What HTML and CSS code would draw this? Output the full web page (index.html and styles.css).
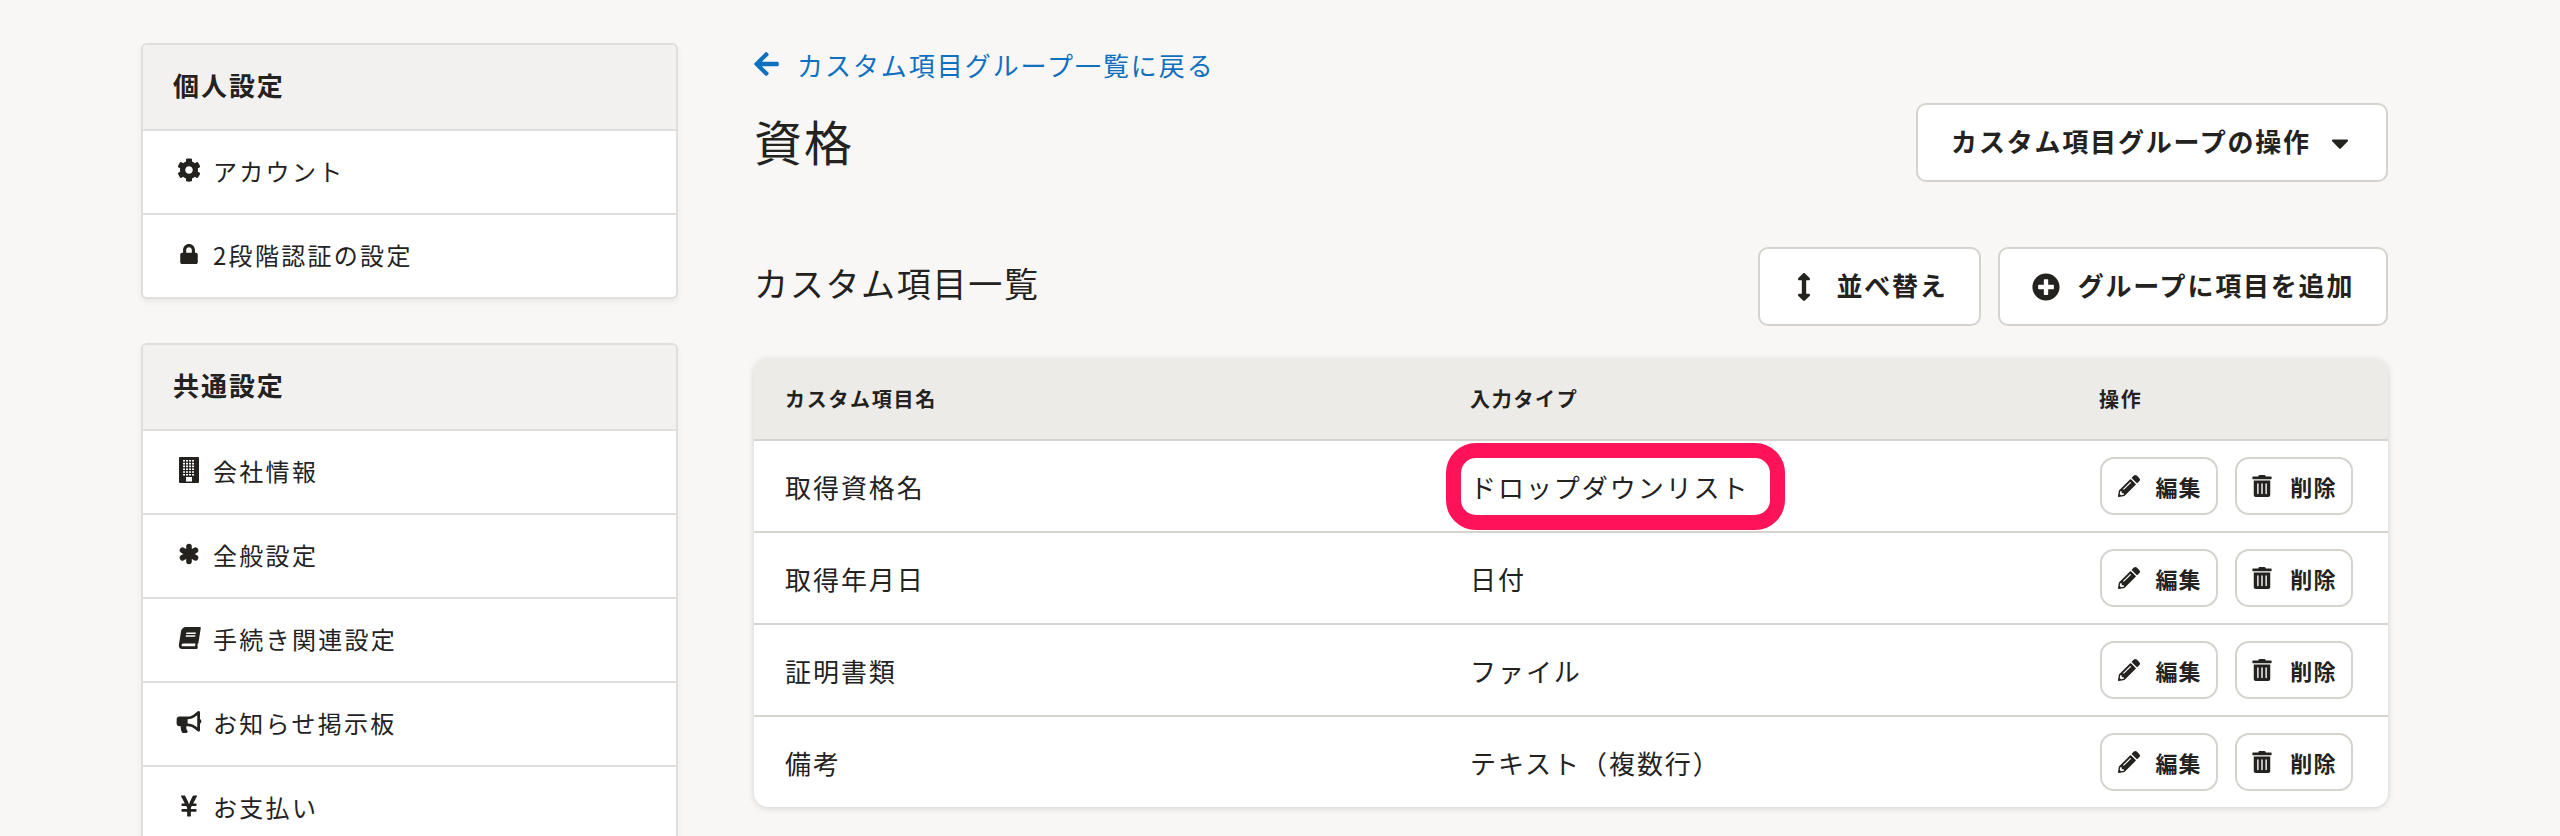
FILE: index.html

```html
<!DOCTYPE html>
<html lang="ja">
<head>
    <meta charset="UTF-8">
    <title>資格</title>
    <link rel="stylesheet" href="styles.css">
</head>
<body>
    <svg class="sprite" xmlns="http://www.w3.org/2000/svg">
        <symbol id="i-cog" viewBox="0 0 512 512"><path d="M487.4 315.7l-42.6-24.6c4.3-23.2 4.3-47 0-70.2l42.6-24.6c4.9-2.8 7.1-8.6 5.5-14-11.1-35.6-30-67.8-54.7-94.6-3.8-4.1-10-5.1-14.8-2.3L380.8 110c-17.9-15.4-38.5-27.3-60.8-35.1V25.8c0-5.6-3.9-10.5-9.4-11.7-36.7-8.2-74.3-7.8-109.2 0-5.5 1.2-9.4 6.1-9.4 11.7V75c-22.2 7.9-42.8 19.8-60.8 35.1L88.7 85.5c-4.9-2.8-11-1.9-14.8 2.3-24.7 26.7-43.6 58.9-54.7 94.6-1.7 5.4.6 11.2 5.5 14L67.3 221c-4.3 23.2-4.3 47 0 70.2l-42.6 24.6c-4.9 2.8-7.1 8.6-5.5 14 11.1 35.6 30 67.8 54.7 94.6 3.8 4.1 10 5.1 14.8 2.3l42.6-24.6c17.9 15.4 38.5 27.3 60.8 35.1v49.2c0 5.6 3.9 10.5 9.4 11.7 36.7 8.2 74.3 7.8 109.2 0 5.5-1.2 9.4-6.1 9.4-11.7v-49.2c22.2-7.9 42.8-19.8 60.8-35.1l42.6 24.6c4.9 2.8 11 1.9 14.8-2.3 24.7-26.7 43.6-58.9 54.7-94.6 1.5-5.5-.7-11.3-5.6-14.1zM256 336c-44.1 0-80-35.9-80-80s35.9-80 80-80 80 35.9 80 80-35.9 80-80 80z"/></symbol>
        <symbol id="i-lock" viewBox="0 0 448 512"><path d="M400 224h-24v-72C376 68.2 307.8 0 224 0S72 68.2 72 152v72H48c-26.5 0-48 21.5-48 48v192c0 26.5 21.5 48 48 48h352c26.5 0 48-21.5 48-48V272c0-26.5-21.5-48-48-48zm-104 0H152v-72c0-39.7 32.3-72 72-72s72 32.3 72 72v72z"/></symbol>
        <symbol id="i-building" viewBox="0 0 20 26">
            <path fill-rule="evenodd" d="M1 0h18a1 1 0 0 1 1 1v24a1 1 0 0 1-1 1H1a1 1 0 0 1-1-1V1a1 1 0 0 1 1-1zM4 3v1.600h2V3zm3 0v1.600h2V3zm3 0v1.600h2V3zm3 0v1.600h2V3zM4 5.800v1.600h2V5.800zm3 0v1.600h2V5.800zm3 0v1.600h2V5.800zm3 0v1.600h2V5.800zM4 8.600v1.600h2V8.600zm3 0v1.600h2V8.600zm3 0v1.600h2V8.600zm3 0v1.600h2V8.600zM4 11.400V13h2v-1.600zm3 0V13h2v-1.600zm3 0V13h2v-1.600zm3 0V13h2v-1.600zM4 14.200v1.600h2v-1.600zm3 0v1.600h2v-1.600zm3 0v1.600h2v-1.600zm3 0v1.600h2v-1.600zM4 17v1.600h2V17zm3 0v1.600h2V17zm3 0v1.600h2V17zm3 0v1.600h2V17zM7 20v4.500h6V20z"/>
        </symbol>
        <symbol id="i-asterisk" viewBox="0 0 22 22"><path d="M11 3.500v15M4.500 7.250l13 7.500M17.500 7.250l-13 7.500" fill="none" stroke="currentColor" stroke-width="5.600" stroke-linecap="round"/></symbol>
        <symbol id="i-book" viewBox="-40 0 540 512"><path transform="skewX(-9) translate(60 0)" d="M448 360V24c0-13.3-10.7-24-24-24H96C43 0 0 43 0 96v320c0 53 43 96 96 96h328c13.3 0 24-10.7 24-24v-16c0-7.5-3.5-14.3-8.9-18.7-4.2-15.4-4.2-59.3 0-74.7 5.4-4.3 8.9-11.1 8.9-18.6zM128 134c0-3.3 2.7-6 6-6h212c3.3 0 6 2.7 6 6v20c0 3.3-2.7 6-6 6H134c-3.3 0-6-2.7-6-6v-20zm0 64c0-3.3 2.7-6 6-6h212c3.3 0 6 2.7 6 6v20c0 3.3-2.7 6-6 6H134c-3.3 0-6-2.7-6-6v-20zm253.4 250H96c-17.7 0-32-14.3-32-32 0-17.6 14.4-32 32-32h285.4c-1.9 17.1-1.9 46.9 0 64z"/></symbol>
        <symbol id="i-bullhorn" viewBox="0 0 576 512"><path d="M576 240c0-23.63-12.95-44.04-32-55.12V32.01C544 23.26 537.02 0 512 0c-7.12 0-14.19 2.38-19.98 7.02l-85.03 68.03C364.28 109.19 310.66 128 256 128H64c-35.35 0-64 28.65-64 64v96c0 35.35 28.65 64 64 64h33.7c-1.39 10.48-2.18 21.14-2.18 32 0 39.77 9.26 77.35 25.56 110.94 5.19 10.69 16.52 17.06 28.4 17.06h74.28c26.05 0 41.69-29.84 25.9-50.56-16.4-21.52-26.15-48.36-26.15-77.44 0-11.11 1.62-21.79 4.41-32H256c54.66 0 108.28 18.81 150.98 52.95l85.03 68.03a32.023 32.023 0 0 0 19.98 7.02c24.92 0 32-22.78 32-32V295.13C563.05 284.04 576 263.63 576 240zm-96 141.42l-33.05-26.44C392.95 311.78 325.12 288 256 288v-96c69.12 0 136.95-23.78 190.95-66.98L480 98.58v282.84z"/></symbol>
        <symbol id="i-yen" viewBox="0 0 384 512"><path d="M351.2 32h-65.3c-4.6 0-8.8 2.6-10.8 6.7l-55.4 113.2c-14.5 34.7-27.1 71.9-27.1 71.9h-1.3s-12.6-37.2-27.1-71.9L108.8 38.7c-2-4.1-6.2-6.7-10.8-6.7H32.8c-9.1 0-14.9 9.7-10.6 17.7L102.6 200H44c-6.6 0-12 5.4-12 12v32c0 6.6 5.4 12 12 12h88.2l19.8 37.2V320H44c-6.6 0-12 5.4-12 12v32c0 6.6 5.4 12 12 12h108v92c0 6.6 5.4 12 12 12h56c6.6 0 12-5.4 12-12v-92h108c6.6 0 12-5.4 12-12v-32c0-6.6-5.4-12-12-12H232v-26.8l19.8-37.2H340c6.6 0 12-5.4 12-12v-32c0-6.6-5.4-12-12-12h-58.6l80.4-150.3c4.3-8-1.5-17.7-10.6-17.7z"/></symbol>
        <symbol id="i-arrow-left" viewBox="0 0 448 512"><path d="M257.5 445.1l-22.2 22.2c-9.4 9.4-24.6 9.4-33.9 0L7 273c-9.4-9.4-9.4-24.6 0-33.9L201.4 44.7c9.4-9.4 24.6-9.4 33.9 0l22.2 22.2c9.5 9.5 9.3 25-.4 34.3L136.6 216H424c13.3 0 24 10.7 24 24v32c0 13.3-10.7 24-24 24H136.6l120.5 114.8c9.8 9.3 10 24.8.4 34.3z"/></symbol>
        <symbol id="i-caret" viewBox="0 0 320 512"><path d="M31.3 192h257.3c17.8 0 26.7 21.5 14.1 34.1L174.1 354.8c-7.8 7.8-20.5 7.8-28.3 0L17.2 226.1C4.6 213.5 13.5 192 31.3 192z"/></symbol>
        <symbol id="i-sort" viewBox="0 0 256 512"><path d="M214.059 377.941H168V134.059h46.059c21.382 0 32.09-25.851 16.971-40.971L144.971 7.029c-9.373-9.373-24.568-9.373-33.941 0L24.971 93.088c-15.119 15.119-4.411 40.971 16.971 40.971H88v243.882H41.941c-21.382 0-32.09 25.851-16.971 40.971l86.059 86.059c9.373 9.373 24.568 9.373 33.941 0l86.059-86.059c15.12-15.119 4.412-40.971-16.97-40.971z"/></symbol>
        <symbol id="i-plus" viewBox="0 0 512 512"><path d="M256 8C119 8 8 119 8 256s111 248 248 248 248-111 248-248S393 8 256 8zm144 276c0 6.6-5.4 12-12 12h-92v92c0 6.6-5.4 12-12 12h-56c-6.6 0-12-5.4-12-12v-92h-92c-6.6 0-12-5.4-12-12v-56c0-6.6 5.4-12 12-12h92v-92c0-6.6 5.4-12 12-12h56c6.6 0 12 5.4 12 12v92h92c6.6 0 12 5.4 12 12v56z"/></symbol>
        <symbol id="i-pencil" viewBox="0 0 512 512"><path d="M497.9 142.1l-46.1 46.1c-4.7 4.7-12.3 4.7-17 0l-111-111c-4.7-4.7-4.7-12.3 0-17l46.1-46.1c18.7-18.7 49.1-18.7 67.9 0l60.1 60.1c18.8 18.7 18.8 49.1 0 67.9zM284.2 99.8L21.6 362.4.4 483.9c-2.9 16.4 11.4 30.6 27.8 27.8l121.5-21.3 262.6-262.6c4.7-4.7 4.7-12.3 0-17l-111-111c-4.8-4.7-12.4-4.7-17.1 0zM124.1 339.9c-5.5-5.5-5.5-14.3 0-19.8l154-154c5.5-5.5 14.3-5.5 19.8 0s5.5 14.3 0 19.8l-154 154c-5.5 5.5-14.3 5.5-19.8 0zM88 424h48v36.3l-64.5 11.3-31.1-31.1L51.7 376H88v48z"/></symbol>
        <symbol id="i-trash" viewBox="0 0 448 512"><path d="M32 464a48 48 0 0 0 48 48h288a48 48 0 0 0 48-48V128H32zm272-256a16 16 0 0 1 32 0v224a16 16 0 0 1-32 0zm-96 0a16 16 0 0 1 32 0v224a16 16 0 0 1-32 0zm-96 0a16 16 0 0 1 32 0v224a16 16 0 0 1-32 0zM432 32H312l-9.4-18.7A24 24 0 0 0 281.1 0H166.8a23.72 23.72 0 0 0-21.4 13.3L136 32H16A16 16 0 0 0 0 48v32a16 16 0 0 0 16 16h416a16 16 0 0 0 16-16V48a16 16 0 0 0-16-16z"/></symbol>
    </svg>

    <div class="layout">
        <aside class="sidebar">
            <section class="menu">
                <h3 class="menu-title">個人設定</h3>
                <a class="menu-item"><svg class="menu-icon icon-cog"><use href="#i-cog"/></svg>アカウント</a>
                <a class="menu-item"><svg class="menu-icon icon-short"><use href="#i-lock"/></svg>2段階認証の設定</a>
            </section>
            <section class="menu">
                <h3 class="menu-title">共通設定</h3>
                <a class="menu-item"><svg class="menu-icon icon-tall"><use href="#i-building"/></svg>会社情報</a>
                <a class="menu-item"><svg class="menu-icon"><use href="#i-asterisk"/></svg>全般設定</a>
                <a class="menu-item"><svg class="menu-icon"><use href="#i-book"/></svg>手続き関連設定</a>
                <a class="menu-item"><svg class="menu-icon"><use href="#i-bullhorn"/></svg>お知らせ掲示板</a>
                <a class="menu-item"><svg class="menu-icon icon-yen"><use href="#i-yen"/></svg>お支払い</a>
            </section>
        </aside>

        <main class="content">
            <a class="back-link"><svg class="back-icon"><use href="#i-arrow-left"/></svg>カスタム項目グループ一覧に戻る</a>

            <div class="title-row">
                <h1 class="page-title">資格</h1>
                <button class="btn btn-menu"><span>カスタム項目グループの操作</span><svg class="caret"><use href="#i-caret"/></svg></button>
            </div>

            <div class="section-row">
                <h2 class="section-title">カスタム項目一覧</h2>
                <div class="btn-group">
                    <button class="btn btn-sort"><svg class="btn-icon sort-icon"><use href="#i-sort"/></svg>並べ替え</button>
                    <button class="btn btn-add"><svg class="btn-icon"><use href="#i-plus"/></svg>グループに項目を追加</button>
                </div>
            </div>

            <table class="items">
                <thead>
                    <tr>
                        <th class="col-name">カスタム項目名</th>
                        <th class="col-type">入力タイプ</th>
                        <th class="col-ops">操作</th>
                    </tr>
                </thead>
                <tbody>
                    <tr>
                        <td>取得資格名</td>
                        <td><span class="marked">ドロップダウンリスト</span></td>
                        <td class="ops">
                            <button class="btn-small"><svg class="small-icon pencil-icon"><use href="#i-pencil"/></svg>編集</button>
                            <button class="btn-small"><svg class="small-icon"><use href="#i-trash"/></svg>削除</button>
                        </td>
                    </tr>
                    <tr>
                        <td>取得年月日</td>
                        <td>日付</td>
                        <td class="ops">
                            <button class="btn-small"><svg class="small-icon pencil-icon"><use href="#i-pencil"/></svg>編集</button>
                            <button class="btn-small"><svg class="small-icon"><use href="#i-trash"/></svg>削除</button>
                        </td>
                    </tr>
                    <tr>
                        <td>証明書類</td>
                        <td>ファイル</td>
                        <td class="ops">
                            <button class="btn-small"><svg class="small-icon pencil-icon"><use href="#i-pencil"/></svg>編集</button>
                            <button class="btn-small"><svg class="small-icon"><use href="#i-trash"/></svg>削除</button>
                        </td>
                    </tr>
                    <tr>
                        <td>備考</td>
                        <td>テキスト（複数行）</td>
                        <td class="ops">
                            <button class="btn-small"><svg class="small-icon pencil-icon"><use href="#i-pencil"/></svg>編集</button>
                            <button class="btn-small"><svg class="small-icon"><use href="#i-trash"/></svg>削除</button>
                        </td>
                    </tr>
                </tbody>
            </table>
        </main>
    </div>
</body>
</html>
```

FILE: styles.css

```css
html, body {
    height: 836px;
    overflow: hidden;
}
body {
    margin: 0;
    background-color: #f8f7f6;
    color: #23221f;
    font-family: "Noto Sans CJK JP", "Noto Sans", sans-serif;
    font-size: 26px;
    letter-spacing: 1.95px;
}
a {
    color: inherit;
    text-decoration: none;
}
svg {
    fill: currentColor;
}
.sprite {
    display: none;
}
.layout {
    display: flex;
    align-items: flex-start;
    gap: 76px;
    padding: 43px 172px 0 141px;
}

/* sidebar */
.sidebar {
    flex: 0 0 537px;
    display: flex;
    flex-direction: column;
    gap: 44px;
}
.menu {
    background-color: white;
    border: 2px solid #dfdedc;
    border-radius: 6px;
    box-shadow: 0 3px 6px rgba(0,0,0,0.06);
    overflow: hidden;
}
.menu-title {
    margin: 0;
    height: 78px;
    display: flex;
    align-items: center;
    padding: 0 0 6px 30px;
    background-color: #f2f1ef;
    border-bottom: 2px solid #dfdedc;
    font-size: 26px;
    font-weight: 700;
}
.menu-item {
    height: 78px;
    display: flex;
    align-items: center;
    padding: 0 0 4px 32px;
    font-size: 24px;
    letter-spacing: 2.3px;
}
.menu-item + .menu-item {
    border-top: 2px solid #dfdedc;
}
.menu-icon {
    flex: 0 0 28px;
    width: 28px;
    height: 22px;
    margin-right: 10px;
}
.icon-cog {
    height: 24px;
}
.icon-short {
    height: 20px;
}
.icon-tall {
    height: 26px;
}
.icon-yen {
    height: 24px;
}

/* main */
.content {
    flex: 1;
    min-width: 0;
}
.back-link {
    display: flex;
    align-items: center;
    height: 42px;
    color: #0f70c0;
}
.back-icon {
    width: 25px;
    height: 28px;
    margin-right: 18px;
}
.title-row {
    display: flex;
    justify-content: space-between;
    align-items: center;
    margin-top: 18px;
}
.page-title {
    margin: 0;
    padding-bottom: 6px;
    font-size: 48px;
    font-weight: 400;
}
.section-row {
    display: flex;
    justify-content: space-between;
    align-items: center;
    margin-top: 65px;
}
.section-title {
    margin: 0;
    padding-bottom: 8px;
    font-size: 34px;
    font-weight: 400;
    letter-spacing: 1.7px;
}
.btn-group {
    display: flex;
    gap: 17px;
}
.btn {
    display: flex;
    align-items: center;
    justify-content: center;
    box-sizing: border-box;
    height: 79px;
    padding: 0 0 4px;
    background-color: white;
    border: 2px solid #d6d3cf;
    border-radius: 10px;
    color: inherit;
    font-family: inherit;
    font-size: 26px;
    font-weight: 700;
    letter-spacing: 1.8px;
}
.btn-menu {
    width: 472px;
}
.caret {
    width: 18px;
    height: 28px;
    margin: 4px 4px 0 20px;
}
.btn-icon {
    width: 28px;
    height: 28px;
    margin: 4px 18px 0 0;
}
.btn-sort {
    width: 223px;
}
.btn-add {
    width: 390px;
}
.sort-icon {
    width: 14px;
    margin: 4px 25px 0 6px;
}

/* table */
.items {
    width: 100%;
    margin-top: 33px;
    border-collapse: separate;
    border-spacing: 0;
    table-layout: fixed;
    background-color: white;
    border-radius: 14px;
    box-shadow: 0 1px 6px rgba(0,0,0,0.16);
}
.items th {
    height: 78px;
    padding: 0 0 2px 31px;
    background-color: #ecebe7;
    border-bottom: 2px solid #d6d3cf;
    font-size: 20px;
    font-weight: 700;
    letter-spacing: 1.7px;
    text-align: left;
}
.items th:first-child {
    border-top-left-radius: 14px;
}
.items th:last-child {
    border-top-right-radius: 14px;
}
.col-name {
    width: 654px;
}
.col-type {
    width: 598px;
}
.items td {
    height: 90px;
    padding: 0 0 0 31px;
    border-bottom: 2px solid #d6d3cf;
}
.items tr:last-child td {
    border-bottom: none;
}
.items td.ops {
    padding-left: 32px;
    white-space: nowrap;
    font-size: 0;
}
.marked {
    position: relative;
}
.marked::after {
    content: "";
    position: absolute;
    left: -24px;
    top: -25px;
    width: 339px;
    height: 87px;
    box-sizing: border-box;
    border: 15px solid #ff1358;
    border-radius: 30px;
}
.btn-small {
    display: inline-flex;
    align-items: center;
    justify-content: center;
    width: 118px;
    height: 58px;
    padding: 0;
    background-color: white;
    border: 2px solid #d6d3cf;
    border-radius: 14px;
    color: inherit;
    font-family: inherit;
    font-size: 22px;
    font-weight: 700;
    letter-spacing: 1.1px;
}
.btn-small + .btn-small {
    margin-left: 15px;
}
.small-icon {
    width: 22px;
    height: 22px;
    margin-right: 17px;
}
.pencil-icon {
    margin: 0 15px 0 2px;
}
```
